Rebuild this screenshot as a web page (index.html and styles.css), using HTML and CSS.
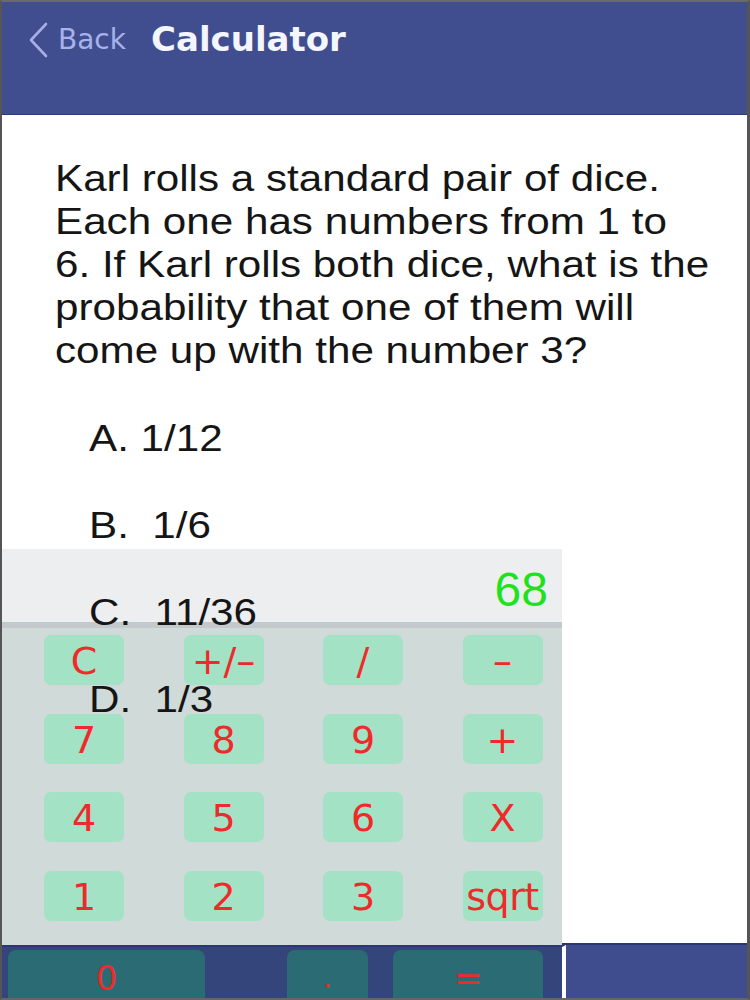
FILE: index.html
```html
<!DOCTYPE html>
<html>
<head>
<meta charset="utf-8">
<link rel="stylesheet" href="styles.css">
</head>
<body>
<div class="screen">
  <header class="navbar">
    <div class="back">
      <svg class="chev" width="22" height="36" viewBox="0 0 22 36"><path d="M19 2 L4 18 L19 34" fill="none" stroke="#a6afe5" stroke-width="2.6" stroke-linecap="round" stroke-linejoin="round"/></svg>
      <span class="back-label">Back</span>
    </div>
    <div class="title">Calculator</div>
  </header>
  <main class="content">
    <div class="question">
      <div class="qline">Karl rolls a standard pair of dice.</div>
      <div class="qline">Each one has numbers from 1 to</div>
      <div class="qline">6. If Karl rolls both dice, what is the</div>
      <div class="qline">probability that one of them will</div>
      <div class="qline">come up with the number 3?</div>
    </div>
    <div class="options">
      <div class="opt">A. 1/12</div>
      <div class="opt">B.  1/6</div>
      <div class="opt">C.  11/36</div>
      <div class="opt">D.  1/3</div>
    </div>
  </main>
  <div class="tabbar"></div>
  <div class="calc">
    <div class="display">68</div>
    <div class="divider"></div>
    <div class="keypad">
      <div class="key">C</div><div class="key">+/–</div><div class="key">/</div><div class="key">–</div>
      <div class="key">7</div><div class="key">8</div><div class="key">9</div><div class="key">+</div>
      <div class="key">4</div><div class="key">5</div><div class="key">6</div><div class="key">X</div>
      <div class="key">1</div><div class="key">2</div><div class="key">3</div><div class="key sqrt">sqrt</div>
    </div>
    <div class="bottomrow">
      <div class="bkey zero">0</div>
      <div class="bkey dot">.</div>
      <div class="bkey eq">=</div>
    </div>
  </div>
</div>
</body>
</html>
```
FILE: styles.css
```css
html, body {
  margin: 0;
  padding: 0;
  background: #ffffff;
}
.screen {
  position: relative;
  width: 750px;
  height: 1000px;
  box-sizing: border-box;
  border-top: 2px solid #6a6a6a;
  border-left: 2px solid #555555;
  border-right: 3px solid #555555;
  border-bottom: 2px solid #666666;
  background: #ffffff;
  overflow: hidden;
}
.navbar {
  height: 113px;
  background: #404e90;
  border-bottom: 1px solid #2f3a78;
  box-sizing: border-box;
  display: flex;
  align-items: flex-start;
  padding-left: 25px;
  padding-top: 17px;
  font-family: "DejaVu Sans", sans-serif;
}
.back {
  display: flex;
  align-items: center;
  height: 40px;
  margin-top: 1px;
}
.chev {
  display: block;
  margin-right: 9px;
}
.back-label {
  font-size: 28px;
  color: #a9b2e8;
  line-height: 40px;
}
.title {
  margin-left: 25px;
  font-size: 34px;
  font-weight: bold;
  color: #f4f6ff;
  line-height: 40px;
}
.content {
  position: relative;
  z-index: 2;
  font-family: "Liberation Sans", Arial, sans-serif;
  color: #151515;
  padding-left: 53px;
  padding-top: 42px;
}
.question {
  font-size: 37px;
  line-height: 43px;
  transform: scaleX(1.14);
  transform-origin: left top;
  white-space: nowrap;
}
.options {
  margin-top: 23px;
  margin-left: 34px;
  font-size: 37px;
  transform: scaleX(1.14);
  transform-origin: left top;
}
.opt {
  height: 87px;
  line-height: 87px;
  white-space: pre;
}
.tabbar {
  position: absolute;
  left: 0;
  right: 0;
  bottom: 0;
  height: 53px;
  background: #3f4d8e;
  border-top: 2px solid #2c3675;
}
.calc {
  position: absolute;
  left: 0;
  top: 547px;
  z-index: 1;
  width: 560px;
  display: flex;
  flex-direction: column;
  align-items: flex-start;
}
.display {
  width: 560px;
  height: 73px;
  background: #eceef0;
  box-sizing: border-box;
  text-align: right;
  padding-right: 14px;
  font-family: "Liberation Sans", Arial, sans-serif;
  font-size: 48px;
  line-height: 82px;
  color: #1fe21f;
}
.divider {
  width: 560px;
  height: 6px;
  background: #c4cacb;
}
.keypad {
  width: 560px;
  height: 317px;
  box-sizing: border-box;
  background: #cfdad9;
  padding: 7px 0 0 42px;
  display: grid;
  grid-template-columns: repeat(4, 80px);
  grid-auto-rows: 50px;
  column-gap: 59.5px;
  row-gap: 28.5px;
}
.key, .bkey {
  border-radius: 7px;
  text-align: center;
  font-family: "DejaVu Sans", sans-serif;
  font-size: 38px;
  line-height: 52px;
  color: #ee2a2a;
}
.key {
  background: #a3e2c5;
}
.sqrt {
  letter-spacing: -0.5px;
}
.bottomrow {
  width: 560px;
  height: 53px;
  border-top: 2px solid #2c3675;
  border-right: 4px solid #ffffff;
  background: #34457b;
  display: flex;
  padding-top: 3px;
  box-sizing: content-box;
}
.bkey {
  background: #2b6b74;
  height: 55px;
  font-size: 34px;
  line-height: 56px;
  border-radius: 8px;
}
.zero {
  margin-left: 6px;
  width: 197px;
}
.dot {
  margin-left: 82px;
  width: 81px;
  font-size: 30px;
}
.eq {
  margin-left: 25px;
  width: 150px;
}
```
